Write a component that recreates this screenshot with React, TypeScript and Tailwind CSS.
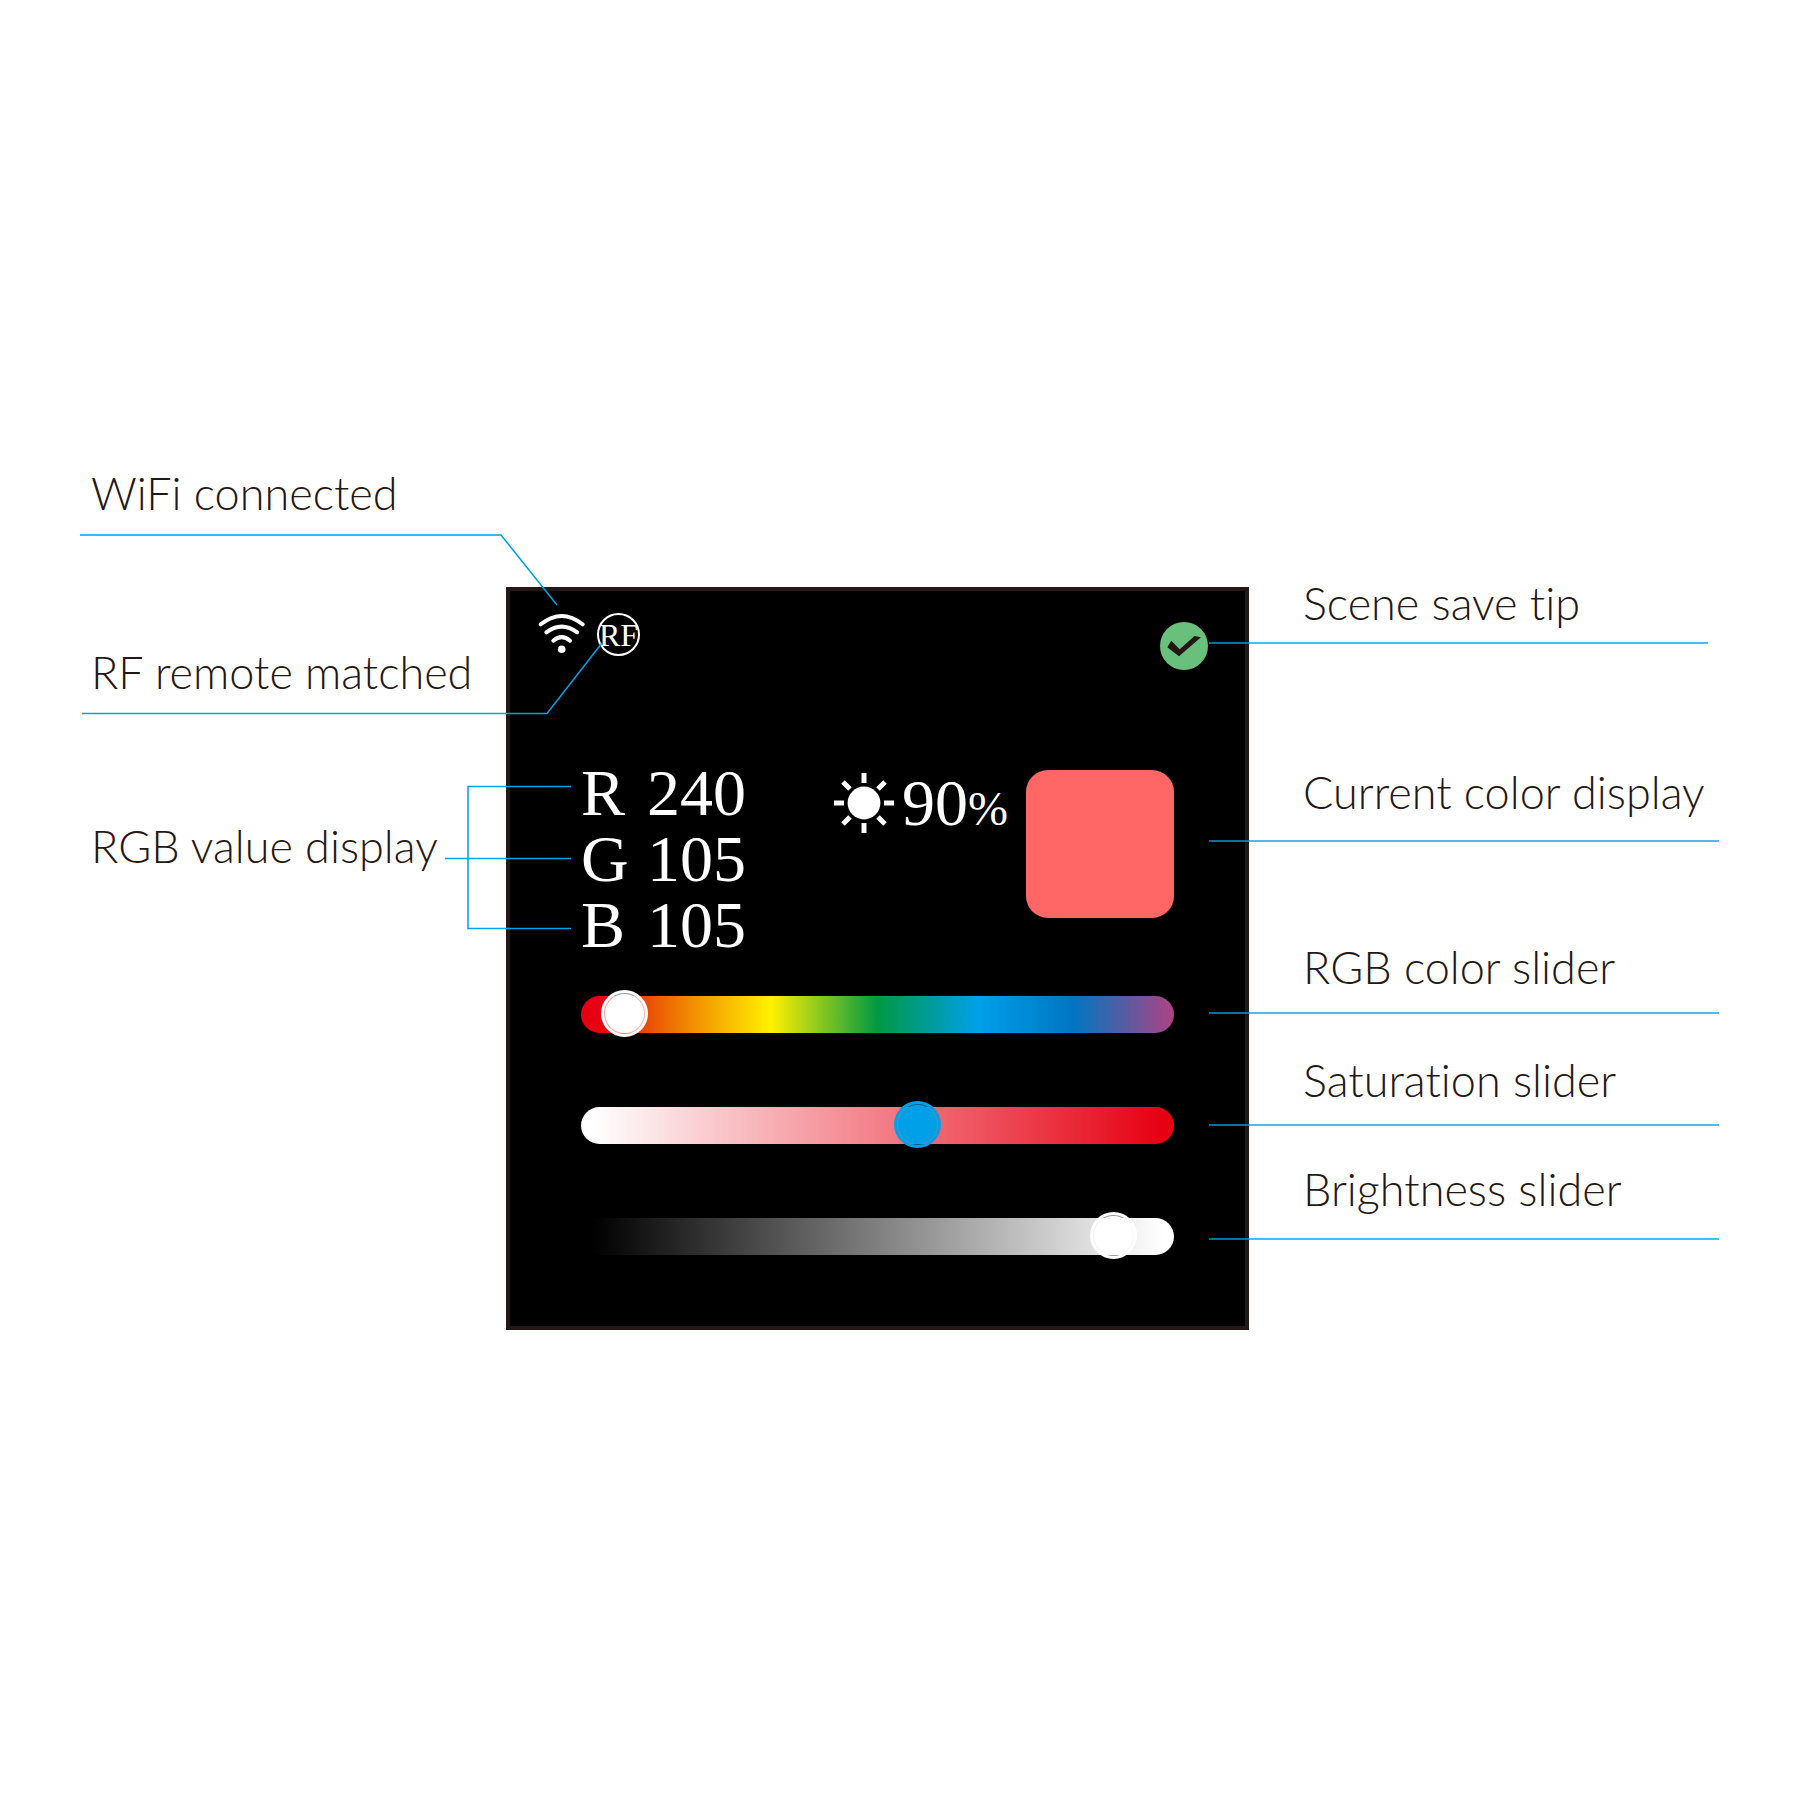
import { useState } from "react";
import type { ReactNode } from "react";

const rangeBase =
  "block h-[47px] w-full cursor-pointer appearance-none bg-transparent outline-none " +
  "[&::-webkit-slider-runnable-track]:h-[37px] [&::-webkit-slider-runnable-track]:rounded-full " +
  "[&::-webkit-slider-thumb]:-mt-[6px] [&::-webkit-slider-thumb]:size-[47px] [&::-webkit-slider-thumb]:appearance-none [&::-webkit-slider-thumb]:rounded-full";

const whiteThumb =
  "[&::-webkit-slider-thumb]:bg-[radial-gradient(circle,#fff_19px,rgba(255,255,255,0.6)_20px,#fff_21px)]";
const blueThumb =
  "[&::-webkit-slider-thumb]:bg-[radial-gradient(circle,#00a0e9_19px,rgba(0,160,233,0.6)_20px,#00a0e9_21px)]";

const hueTrack =
  "[&::-webkit-slider-runnable-track]:bg-[linear-gradient(to_right,#e60012_3%,#ea5504_12%,#f39800_20%,#fff100_32%,#009944_50%,#00a0e9_67%,#0075c2_83%,#ae4383_100%)]";
const saturationTrack =
  "[&::-webkit-slider-runnable-track]:bg-[linear-gradient(to_right,#fff_2%,#e60012_98%)]";
const brightnessTrack =
  "[&::-webkit-slider-runnable-track]:bg-[linear-gradient(to_right,#000_2%,#fff_98%)]";

function Slider({ label, start, className }: { label: string; start: number; className: string }) {
  const [value, setValue] = useState(start);
  return (
    <input
      type="range"
      aria-label={label}
      min={0}
      max={100}
      step={0.1}
      value={value}
      onChange={(e) => setValue(Number(e.target.value))}
      className={`${rangeBase} ${className}`}
    />
  );
}

function WifiIcon() {
  return (
    <svg width="47" height="42" viewBox="0 0 47 42" fill="none" stroke="#fff" strokeWidth="4" strokeLinecap="round" aria-label="WiFi">
      <path d="M2.8 11.3Q23.7-5.300 44.600 11.3" />
      <path d="M8.300 19.3Q23.7 8 39.200 19.3" />
      <path d="M15.300 27.7Q23.7 20.5 32.100 27.7" />
      <circle cx="23.7" cy="36.3" r="3.8" fill="#fff" stroke="none" />
    </svg>
  );
}

function SunIcon() {
  return (
    <svg width="60" height="60" viewBox="-30 -30 60 60" stroke="#fff" strokeWidth="5" aria-hidden="true">
      <circle r="16.4" fill="#fff" stroke="none" />
      <path d="M0-30V-20M0 30V20M-30 0H-20M30 0H20M-21-21L-14-14M21-21L14-14M-21 21L-14 14M21 21L14 14" />
    </svg>
  );
}

function CheckBadge() {
  return (
    <svg width="48" height="48" viewBox="0 0 48 48" aria-label="Scene saved">
      <circle cx="24" cy="24" r="24" fill="#69bf7c" />
      <path d="M7.3 25.3L11.3 18.7L19.7 27.3L34.5 14L41 15.3L19 34.3Z" fill="#231815" />
    </svg>
  );
}

function Note({ children }: { children: ReactNode }) {
  return (
    <p className="text-[45px] leading-[60px] font-light whitespace-nowrap [font-variant-ligatures:none]">
      {children}
    </p>
  );
}

function RightNote({ children, className, line }: { children: ReactNode; className: string; line: string }) {
  return (
    <div className={className}>
      <div className="pl-[54px]">
        <Note>{children}</Note>
      </div>
      <div className={`relative -ml-[40px] h-[2px] bg-[#00a0e9]/70 ${line}`} />
    </div>
  );
}

function LeftConnectors() {
  return (
    <svg
      className="pointer-events-none absolute top-0 right-0 z-10 overflow-visible"
      width="426"
      height="480"
      viewBox="0 0 426 480"
      fill="none"
      stroke="#00a0e9"
      strokeWidth="1.5"
      aria-hidden="true"
    >
      <path d="M0 72H421L477 142" />
      <path d="M2 250.5H467L522 180" />
      <path d="M491 323.5H388V465.5H491M365 395.5H491" />
    </svg>
  );
}

const channels = [
  { name: "R", value: 240 },
  { name: "G", value: 105 },
  { name: "B", value: 105 },
];

export default function App() {
  return (
    <main className="flex min-h-screen items-center overflow-hidden bg-white pb-[7px] font-['Lato',sans-serif] text-[#231815]">
      <div className="grid w-full grid-cols-[minmax(0,506fr)_743px_minmax(0,551fr)] items-start">
        <div className="relative pl-[91px]">
          <Note>WiFi connected</Note>
          <div className="mt-[119px]">
            <Note>RF remote matched</Note>
          </div>
          <div className="mt-[114px]">
            <Note>RGB value display</Note>
          </div>
          <LeftConnectors />
        </div>

        <section className="mt-[124px] border-4 border-[#231815] bg-black pb-[66px] text-white">
          <header className="flex h-[79px] items-start gap-3 pt-[22px] pr-[37px] pl-7">
            <WifiIcon />
            <span className="flex size-[43px] items-center justify-center rounded-full border-2 border-white font-['Liberation_Serif',serif] text-[32px] leading-none">
              RF
            </span>
            <span className="mt-[9px] ml-auto">
              <CheckBadge />
            </span>
          </header>

          <div className="px-[71px]">
            <div className="mt-[90px] flex items-start">
              <dl className="font-['Liberation_Serif',serif] text-[66px] leading-[66px]">
                {channels.map((c) => (
                  <div key={c.name} className="flex">
                    <dt className="w-[66px]">{c.name}</dt>
                    <dd>{c.value}</dd>
                  </div>
                ))}
              </dl>
              <div className="mt-[10px] mr-[18px] ml-auto flex items-center gap-2">
                <SunIcon />
                <p className="font-['Liberation_Serif',serif] text-[66px] leading-[66px]">
                  90<span className="text-[48px] leading-none">%</span>
                </p>
              </div>
              <div className="mt-[10px] size-[148px] rounded-[22px] bg-[#ff6767]" />
            </div>

            <div className="mt-[33px] flex flex-col gap-16">
              <Slider label="RGB color" start={3.7} className={`${hueTrack} ${whiteThumb}`} />
              <Slider label="Saturation" start={57.3} className={`${saturationTrack} ${blueThumb}`} />
              <Slider label="Brightness" start={93.3} className={`${brightnessTrack} ${whiteThumb}`} />
            </div>
          </div>
        </section>

        <div className="pt-[110px] pr-[81px]">
          <RightNote className="" line="mt-[9px] mr-[11px]">Scene save tip</RightNote>
          <RightNote className="mt-[118px]" line="mt-[18px]">Current color display</RightNote>
          <RightNote className="mt-[95px]" line="mt-[15px]">RGB color slider</RightNote>
          <RightNote className="mt-[36px]" line="mt-[14px]">Saturation slider</RightNote>
          <RightNote className="mt-[33px]" line="mt-[19px]">Brightness slider</RightNote>
        </div>
      </div>
    </main>
  );
}
